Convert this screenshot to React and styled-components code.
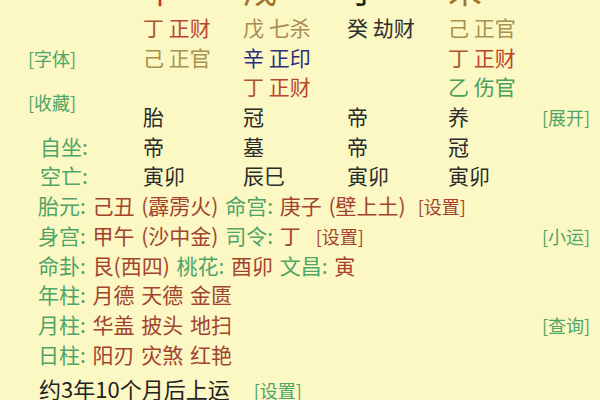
import React from "react";
import styled, { createGlobalStyle } from "styled-components";

const BG = "#fcf8c3";
const GREEN = "#4fa469";
const RUST = "#a3432f";

const Global = createGlobalStyle`
  html, body { margin: 0; padding: 0; background: ${BG}; }
  body { font-family: "Noto Sans CJK SC", "Noto Sans", sans-serif; overflow: hidden; }
`;

const Page = styled.div`
  width: 600px;
  height: 400px;
  overflow: hidden;
  background: ${BG};
  padding-left: 28px;
  box-sizing: border-box;
`;

const Grid = styled.div`
  margin-top: -31px;
  display: grid;
  grid-template-columns: 115px 100px 104px 101px 94px 1fr;
  grid-template-rows: 44px repeat(12, 29.7px);
  font-size: 21px;
  line-height: 29.7px;
  color: #2b2b2b;
  white-space: nowrap;
`;

const Big = styled.div`
  grid-column: ${(p) => p.$col};
  grid-row: 1;
  align-self: start;
  font-size: 34px;
  line-height: 40px;
  color: ${(p) => p.$color};
`;

const Cell = styled.div`
  grid-column: ${(p) => p.$col};
  grid-row: ${(p) => p.$row};
  color: ${(p) => p.$color || "inherit"};
`;

const SideLink = styled.div`
  grid-column: ${(p) => p.$col};
  grid-row: ${(p) => p.$row};
  align-self: center;
  font-size: 18px;
  line-height: 24px;
  color: ${GREEN};
`;

const RowLabel = styled.div`
  grid-column: 1;
  grid-row: ${(p) => p.$row};
  padding-left: 12px;
  color: ${GREEN};
`;

const Line = styled.div`
  grid-column: 1 / 6;
  grid-row: ${(p) => p.$row};
  padding-left: 10px;
  word-spacing: 2px;
`;

const Tone = styled.span`
  color: ${(p) => p.$c};
`;

const Label = styled.span`
  color: ${GREEN};
`;

const Val = styled.span`
  color: ${RUST};
`;

const Setting = styled.span`
  font-size: 18px;
  color: ${(p) => p.$c || RUST};
  margin-left: ${(p) => p.$gap}px;
`;

const Footer = styled.div`
  margin-top: 4px;
  padding-left: 11px;
  font-size: 22px;
  line-height: 30px;
  color: #222;
  white-space: nowrap;
`;

const C = {
  ding: "#a9572f",
  cai: "#bb452e",
  earth: "#a88c52",
  ji: "#a8914f",
  xin: "#2c2f7e",
  gui: "#2e2e2e",
  yi: "#4aa15e",
};

const Pair = ({ s, sc, g, gc }) => (
  <>
    <Tone $c={sc}>{s}</Tone> <Tone $c={gc}>{g}</Tone>
  </>
);

const bigs = [
  { ch: "午", c: "#c2392b" },
  { ch: "戌", c: "#a0702c" },
  { ch: "子", c: "#1f1f1f" },
  { ch: "未", c: "#a5722c" },
];

const hidden = [
  [2, 2, { s: "丁", sc: C.ding, g: "正财", gc: C.cai }],
  [2, 3, { s: "戊", sc: C.earth, g: "七杀", gc: C.earth }],
  [2, 4, { s: "癸", sc: C.gui, g: "劫财", gc: C.gui }],
  [2, 5, { s: "己", sc: C.ji, g: "正官", gc: C.ji }],
  [3, 2, { s: "己", sc: C.ji, g: "正官", gc: C.ji }],
  [3, 3, { s: "辛", sc: C.xin, g: "正印", gc: C.xin }],
  [3, 5, { s: "丁", sc: C.ding, g: "正财", gc: C.cai }],
  [4, 3, { s: "丁", sc: C.ding, g: "正财", gc: C.cai }],
  [4, 5, { s: "乙", sc: C.yi, g: "伤官", gc: C.yi }],
];

const plain = [
  [5, ["胎", "冠", "帝", "养"]],
  [6, ["帝", "墓", "帝", "冠"]],
  [7, ["寅卯", "辰巳", "寅卯", "寅卯"]],
];

export default function App() {
  return (
    <>
      <Global />
      <Page>
        <Grid>
          {bigs.map((b, i) => (
            <Big key={i} $col={i + 2} $color={b.c}>
              {b.ch}
            </Big>
          ))}
          {hidden.map(([r, c, p], i) => (
            <Cell key={i} $row={r} $col={c}>
              <Pair {...p} />
            </Cell>
          ))}
          <SideLink $row="3" $col="1">[字体]</SideLink>
          <SideLink $row="4 / span 2" $col="1">[收藏]</SideLink>
          <SideLink $row="5" $col="6">[展开]</SideLink>

          <RowLabel $row={6}>自坐:</RowLabel>
          <RowLabel $row={7}>空亡:</RowLabel>
          {plain.map(([r, items]) =>
            items.map((t, i) => (
              <Cell key={`${r}-${i}`} $row={r} $col={i + 2}>
                {t}
              </Cell>
            ))
          )}

          <Line $row={8}>
            <Label>胎元:</Label> <Val>己丑 (霹雳火)</Val> <Label>命宫:</Label>{" "}
            <Val>庚子 (壁上土)</Val>
            <Setting $gap={12}>[设置]</Setting>
          </Line>
          <Line $row={9}>
            <Label>身宫:</Label> <Val>甲午 (沙中金)</Val> <Label>司令:</Label>{" "}
            <Val>丁</Val>
            <Setting $gap={15}>[设置]</Setting>
          </Line>
          <SideLink $row={9} $col={6}>[小运]</SideLink>
          <Line $row={10}>
            <Label>命卦:</Label> <Val>艮(西四)</Val> <Label>桃花:</Label>{" "}
            <Val>酉卯</Val> <Label>文昌:</Label> <Val>寅</Val>
          </Line>
          <Line $row={11}>
            <Label>年柱:</Label> <Val>月德 天德 金匮</Val>
          </Line>
          <Line $row={12}>
            <Label>月柱:</Label> <Val>华盖 披头 地扫</Val>
          </Line>
          <SideLink $row={12} $col={6}>[查询]</SideLink>
          <Line $row={13}>
            <Label>日柱:</Label> <Val>阳刃 灾煞 红艳</Val>
          </Line>
        </Grid>
        <Footer>
          约3年10个月后上运
          <Setting $gap={24} $c={GREEN}>[设置]</Setting>
        </Footer>
      </Page>
    </>
  );
}
